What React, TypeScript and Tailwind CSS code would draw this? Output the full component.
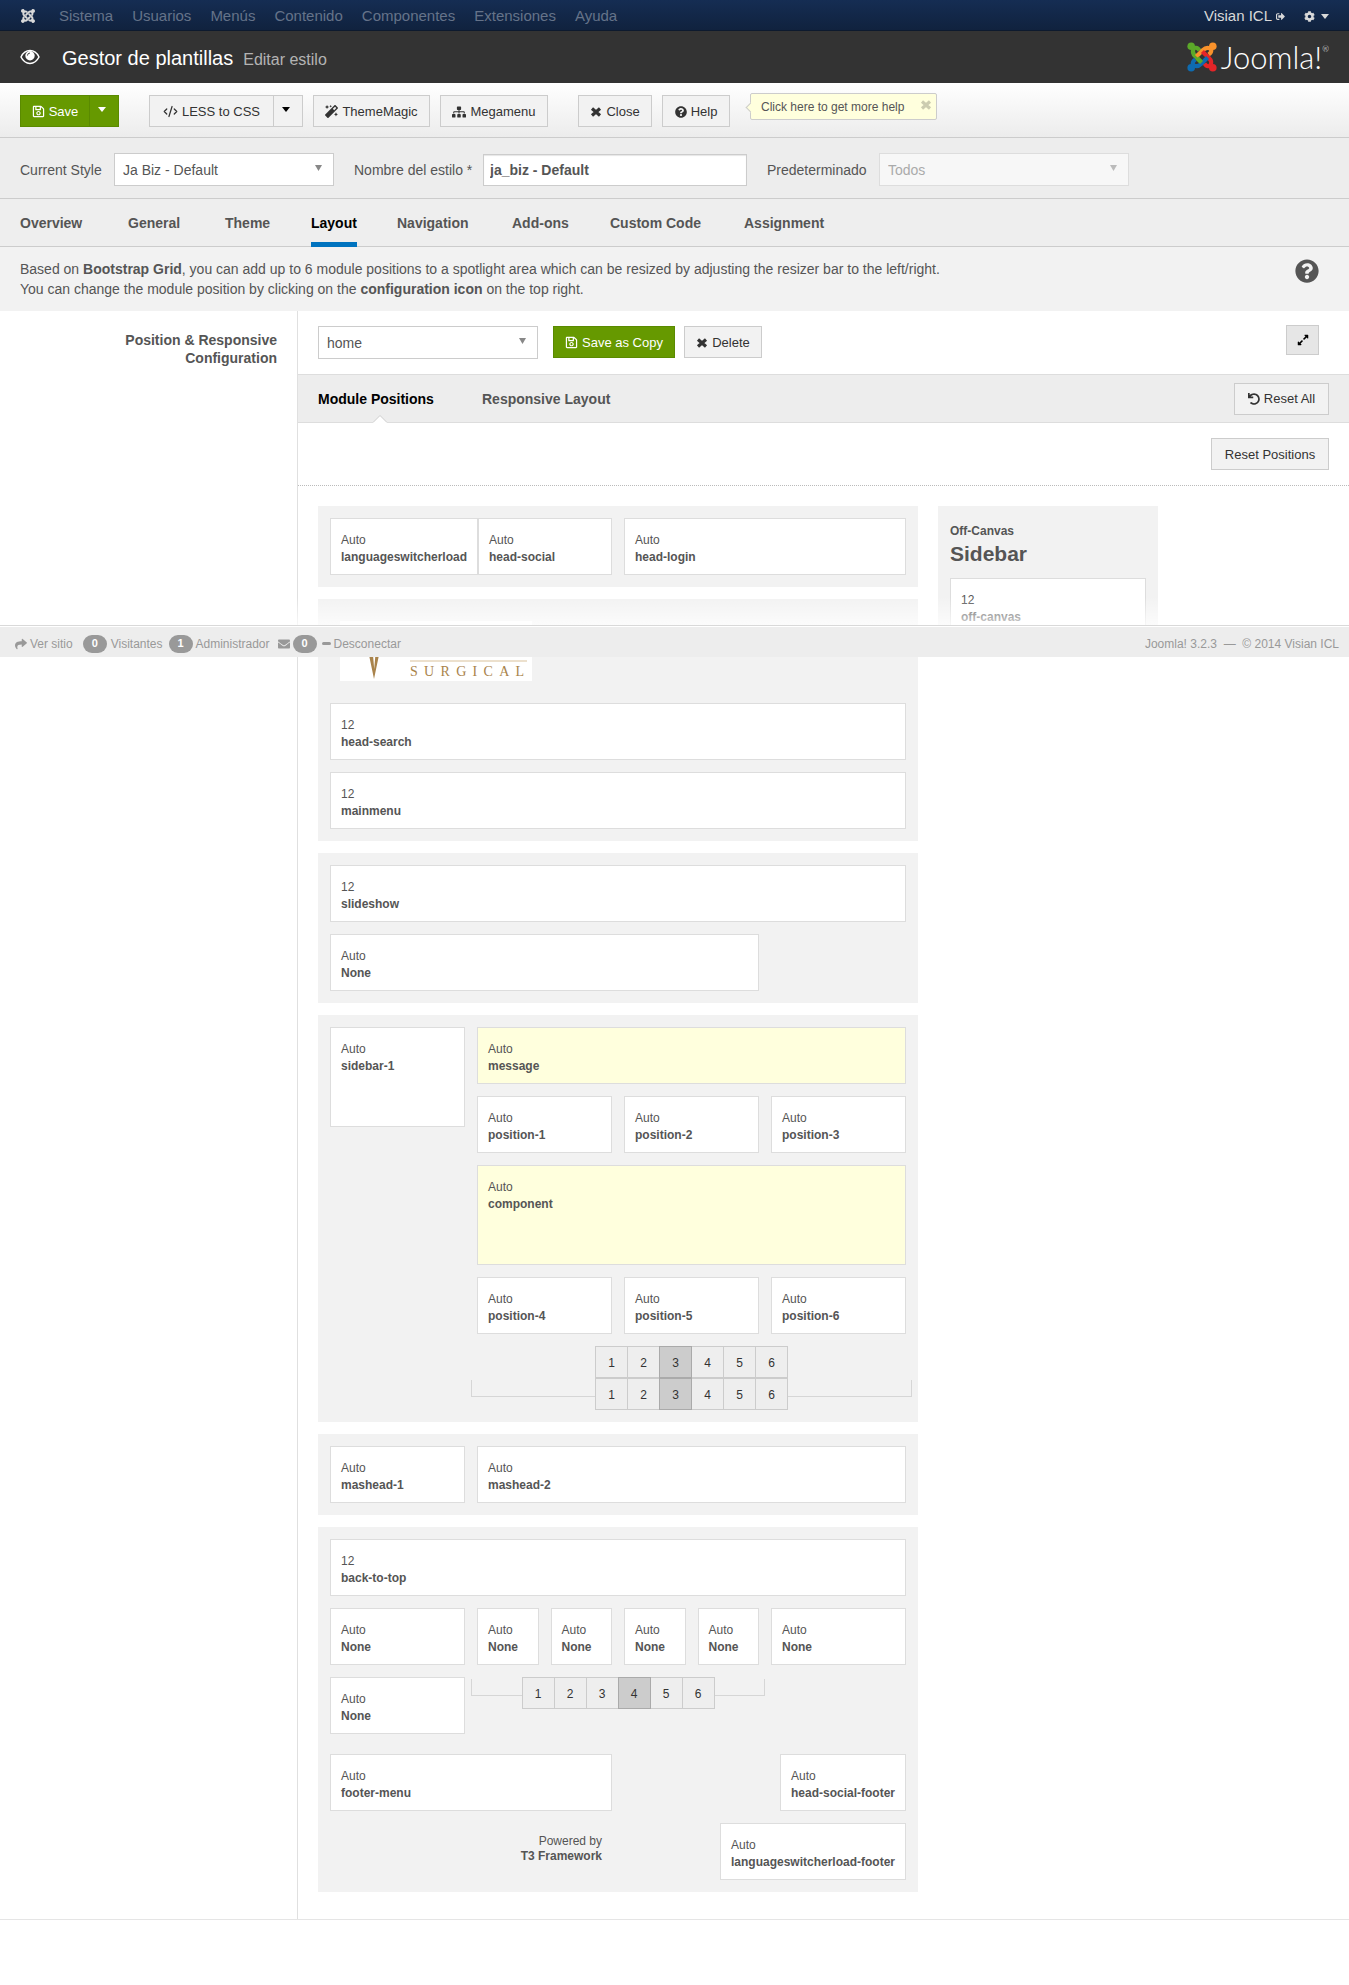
import type { ReactNode } from "react";
import clsx from "clsx";
import { CodeXml } from "lucide-react";
import {
  FaCog,
  FaEnvelope,
  FaExpandAlt,
  FaJoomla,
  FaMagic,
  FaQuestionCircle,
  FaRegSave,
  FaShare,
  FaSignOutAlt,
  FaSitemap,
  FaUndo,
} from "react-icons/fa";

const menu = ["Sistema", "Usuarios", "Menús", "Contenido", "Componentes", "Extensiones", "Ayuda"];

const tabs = [
  { label: "Overview", width: "w-[68px]" },
  { label: "General", width: "w-[57px]" },
  { label: "Theme", width: "w-[46px]" },
  { label: "Layout", width: "w-[46px]" },
  { label: "Navigation", width: "w-[75px]" },
  { label: "Add-ons", width: "w-[58px]" },
  { label: "Custom Code", width: "w-[94px]" },
  { label: "Assignment", width: "w-[82px]" },
];

function Caret({ className }: { className?: string }) {
  return (
    <svg viewBox="0 0 8 5" className={clsx("h-[5px] w-2", className)}>
      <path d="M0 0h8L4 5z" fill="currentColor" />
    </svg>
  );
}

function Cross() {
  return (
    <svg viewBox="0 0 12 12" className="h-3 w-3" fill="none">
      <path d="M2 2.5L10 9.5M10 2.5L2 9.5" stroke="currentColor" strokeWidth="3.2" />
    </svg>
  );
}

function Eye() {
  return (
    <svg viewBox="0 0 20 16" className="h-4 w-5 text-white" fill="none">
      <path
        d="M1 8C3 4 6.2 1.6 10 1.6S17 4 19 8C17 12 13.8 14.4 10 14.4S3 12 1 8z"
        stroke="currentColor"
        strokeWidth="1.5"
      />
      <circle cx="10" cy="6.8" r="4.7" fill="currentColor" />
      <path d="M7.4 6.6A2.7 2.7 0 0 1 10 4" stroke="#333" strokeWidth=".9" />
    </svg>
  );
}

interface ButtonProps {
  children: ReactNode;
  icon?: ReactNode;
  primary?: boolean;
  className?: string;
  label?: string;
}

function Button({ children, icon, primary, className, label }: ButtonProps) {
  return (
    <button
      type="button"
      aria-label={label}
      className={clsx(
        "flex h-8 items-center justify-center gap-1 whitespace-nowrap border pt-px text-[13px]",
        primary
          ? "border-[#5a8a00] bg-[#690] text-white"
          : "border-[#ccc] bg-[#f2f2f2] text-[#333]",
        className
      )}
    >
      {icon}
      {children}
    </button>
  );
}

interface SelectProps {
  id: string;
  value: string;
  className?: string;
  disabled?: boolean;
}

function Select({ id, value, className, disabled }: SelectProps) {
  return (
    <div className={clsx("relative", className)}>
      <select
        id={id}
        aria-label={id === "profile" ? "Layout profile" : undefined}
        disabled={disabled}
        defaultValue={value}
        className={clsx(
          "block h-[33px] w-full appearance-none border px-2 text-sm",
          disabled
            ? "border-[#ddd] bg-[#f7f7f7] text-[#aaa] opacity-100"
            : "border-[#ccc] bg-white text-[#555]"
        )}
      >
        <option>{value}</option>
      </select>
      <svg
        viewBox="0 0 7 6"
        className={clsx(
          "pointer-events-none absolute right-3 top-3 h-1.5 w-[7px]",
          disabled ? "text-[#bbb]" : "text-[#888]"
        )}
      >
        <path d="M0 0h7L3.5 6z" fill="currentColor" />
      </svg>
    </div>
  );
}

function JoomlaMark() {
  const arm = "M12.5 8.5C10.5 5 7 5 6.2 7.6C5.2 10.5 6.5 12.5 8 14L14.6 20.6";
  const pieces = [
    { color: "#5ba829", turn: 0 },
    { color: "#f9922b", turn: 90 },
    { color: "#e52528", turn: 180 },
    { color: "#0e6bb0", turn: 270 },
  ];
  return (
    <svg viewBox="0 0 30 30" className="h-[30px] w-[30px]" fill="none">
      {pieces.map((piece) => (
        <g key={piece.color} transform={`rotate(${piece.turn} 15 15)`}>
          <path d={arm} stroke={piece.color} strokeWidth="4.2" />
          <circle cx="4.2" cy="4.2" r="3.8" fill={piece.color} />
        </g>
      ))}
      <path d="M10 16L14.6 20.6" stroke="#5ba829" strokeWidth="4.2" />
    </svg>
  );
}

interface BoxProps {
  size?: string;
  name: string;
  className?: string;
}

function Box({ size = "Auto", name, className = "bg-white" }: BoxProps) {
  return (
    <div
      className={clsx(
        "min-h-[57px] whitespace-nowrap border border-[#ddd] px-2.5 pt-[13px] pb-2 text-xs/[17px]",
        className
      )}
    >
      <p>{size}</p>
      <p className="font-bold">{name}</p>
    </div>
  );
}

function Panel({ children }: { children: ReactNode }) {
  return <section className="grid grid-cols-12 items-start gap-3 bg-[#f2f2f2] p-3">{children}</section>;
}

function Counter({ active }: { active: number }) {
  return (
    <div className="flex pl-px">
      {[1, 2, 3, 4, 5, 6].map((n) => (
        <button
          key={n}
          type="button"
          className={clsx(
            "-ml-px h-8 w-[33px] border pt-0.5 text-xs text-[#333]",
            n === active ? "relative border-[#aaa] bg-[#ccc]" : "border-[#ccc] bg-[#eee]"
          )}
        >
          {n}
        </button>
      ))}
    </div>
  );
}

// Counter with the bracket lines that show which columns it controls
function Spotlight({ active }: { active: number }) {
  return (
    <div className="-mx-1.5 flex items-start">
      <div className="mt-0.5 h-[17px] flex-1 border-b border-l border-[#d6d6d6]" />
      <Counter active={active} />
      <div className="mt-0.5 h-[17px] flex-1 border-b border-r border-[#d6d6d6]" />
    </div>
  );
}

function Badge({ children }: { children: ReactNode }) {
  return (
    <span className="flex h-[18px] w-6 items-center justify-center rounded-full bg-[#999] text-[11px] font-bold text-white">
      {children}
    </span>
  );
}

function StatusBar() {
  return (
    <footer className="absolute inset-x-0 top-[597px] text-xs text-[#999]">
      <div className="h-7 bg-linear-to-b from-white/0 to-white/75" />
      <div className="border-t border-[#d9d9d9] bg-white pt-px">
        <div className="flex h-[30px] items-center justify-between bg-[#ededed] pt-[3px] pr-2.5 pl-[15px]">
          <div className="flex items-center">
            <a href="#sitio" className="mr-2.5 flex items-center gap-[3px]">
              <FaShare size={12} />
              Ver sitio
            </a>
            <Badge>0</Badge>
            <span className="mr-1.5 ml-1">Visitantes</span>
            <Badge>1</Badge>
            <span className="mr-2 ml-[3px]">Administrador</span>
            <a href="#mensajes" className="mr-[5px] flex items-center gap-[3px]">
              <FaEnvelope size={12} />
              <Badge>0</Badge>
            </a>
            <a href="#salir" className="flex items-center gap-[3px]">
              <span className="h-[3px] w-[9px] rounded-xs bg-[#999]" />
              Desconectar
            </a>
          </div>
          <p className="whitespace-pre">Joomla! 3.2.3 {" — "} © 2014 Visian ICL</p>
        </div>
      </div>
    </footer>
  );
}

function TopBar() {
  return (
    <>
      <nav className="flex h-[31px] items-center gap-[19px] border-b border-[#0d1a2e] bg-linear-to-b from-[#152d53] to-[#10223e] pt-0.5 pr-5 pl-5 text-[15px]">
        <FaJoomla size={16} className="mr-1 text-[#d9d9d9]" />
        {menu.map((item) => (
          <a key={item} href={"#" + item} className="text-[#657389]">
            {item}
          </a>
        ))}
        <a href="#usuario" className="ml-auto flex items-center gap-1 text-[#d9d9d9]">
          Visian ICL
          <FaSignOutAlt size={9} />
        </a>
        <button type="button" aria-label="Opciones" className="flex items-center gap-1.5 text-[#d9d9d9]">
          <FaCog size={11} />
          <Caret />
        </button>
      </nav>
      <header className="flex h-[52px] items-center bg-[#333] pr-5 pl-5">
        <Eye />
        <h1 className="ml-[22px] flex items-baseline gap-2.5 pt-0.5 text-xl text-white">
          Gestor de plantillas
          <small className="text-base text-[#b3b3b3]">Editar estilo</small>
        </h1>
        <div className="ml-auto flex items-center gap-1 text-white">
          <JoomlaMark />
          <span className="flex items-start font-['Lato'] text-[31px]/[30px] font-light">
            Joomla!<small className="text-[8px]/[14px]">®</small>
          </span>
        </div>
      </header>
    </>
  );
}

function Toolbar() {
  return (
    <div className="flex h-[55px] items-start border-b border-[#ccc] bg-linear-to-b from-white to-[#ececec] px-5 pt-3">
      <div className="flex">
        <Button primary icon={<FaRegSave size={13} />} className="w-[70px]">
          Save
        </Button>
        <Button primary label="More save options" className="-ml-px w-[30px] pr-1 pb-1">
          <Caret />
        </Button>
      </div>
      <div className="ml-[30px] flex">
        <Button icon={<CodeXml size={15} />} className="w-[125px]">
          LESS to CSS
        </Button>
        <Button label="More LESS options" className="-ml-px w-[30px] pr-1 pb-1">
          <Caret className="text-black" />
        </Button>
      </div>
      <Button icon={<FaMagic size={13} />} className="ml-2.5 w-[117px]">
        ThemeMagic
      </Button>
      <Button icon={<FaSitemap size={14} />} className="ml-2.5 w-[108px]">
        Megamenu
      </Button>
      <Button icon={<Cross />} className="ml-[30px] w-[74px]">
        Close
      </Button>
      <Button icon={<FaQuestionCircle size={12} />} className="ml-2.5 w-[68px]">
        Help
      </Button>
      <div className="relative -mt-0.5 ml-5 flex h-[27px] w-[187px] items-center rounded-xs border border-[#ccc] bg-[#ffd] pt-px pl-2.5 text-xs text-[#555]">
        <span className="absolute top-2.5 -left-[4px] h-[7px] w-[7px] rotate-45 border-b border-l border-[#ccc] bg-[#ffd]" />
        Click here to get more help
        <button type="button" aria-label="Cerrar" className="absolute top-[5px] right-1 text-[#ccccb0]">
          <Cross />
        </button>
      </div>
    </div>
  );
}

function StyleForm() {
  return (
    <form className="flex h-[61px] items-center border-b border-[#ccc] bg-[#ededed] px-5 pt-[3px] text-sm">
      <label htmlFor="style" className="mr-2.5 w-[84px]">
        Current Style
      </label>
      <Select id="style" value="Ja Biz - Default" className="w-[220px]" />
      <label htmlFor="name" className="mr-2.5 ml-5 w-[119px]">
        Nombre del estilo *
      </label>
      <input
        id="name"
        defaultValue="ja_biz - Default"
        className="h-8 w-[264px] border border-[#ccc] bg-white px-1.5 font-bold shadow-[inset_0_1px_1px_#0000001a]"
      />
      <label htmlFor="default" className="mr-2.5 ml-5 w-[102px]">
        Predeterminado
      </label>
      <Select id="default" value="Todos" className="w-[250px]" disabled />
    </form>
  );
}

export default function App() {
  return (
    <div className="relative bg-white pb-16 font-['Liberation_Sans',Arial,sans-serif] text-[#555]">
      <TopBar />
      <Toolbar />
      <StyleForm />

      <nav className="flex h-12 gap-10 border-b border-[#ccc] bg-[#eee] px-5 text-sm font-bold">
        {tabs.map((tab) => (
          <a
            key={tab.label}
            href={"#" + tab.label}
            className={clsx(
              "-mb-px flex items-center whitespace-nowrap border-b-5 pt-1",
              tab.width,
              tab.label === "Layout" ? "border-[#0073bf] text-black" : "border-transparent"
            )}
          >
            {tab.label}
          </a>
        ))}
      </nav>

      <div className="flex h-16 justify-between bg-[#f2f2f2] pt-3 pr-[30px] pl-5 text-sm/5">
        <p>
          Based on <b>Bootstrap Grid</b>, you can add up to 6 module positions to a spotlight area which can be
          resized by adjusting the resizer bar to the left/right.
          <br />
          You can change the module position by clicking on the <b>configuration icon</b> on the top right.
        </p>
        <FaQuestionCircle size={24} />
      </div>

      <div className="flex border-b border-[#e5e5e5]">
        <aside className="w-[298px] shrink-0 border-r border-[#e0e0e0] pt-5 pr-5 text-right text-sm/[18px] font-bold">
          <h2>
            Position &amp; Responsive
            <br />
            Configuration
          </h2>
        </aside>

        <main className="flex-1">
          <div className="flex h-[63px] items-start pt-[15px] pr-[30px] pl-5">
            <Select id="profile" value="home" className="w-[220px]" />
            <Button primary icon={<FaRegSave size={13} />} className="ml-[15px] w-[122px]">
              Save as Copy
            </Button>
            <Button icon={<Cross />} className="ml-[9px] w-[78px]">
              Delete
            </Button>
            <button
              type="button"
              aria-label="Full screen"
              className="-mt-px ml-auto flex h-[30px] w-[33px] items-center justify-center border border-[#ccc] bg-[#e6e6e6] text-black"
            >
              <FaExpandAlt size={12} />
            </button>
          </div>

          <div className="flex h-[49px] items-center border-y border-[#ddd] bg-[#ededed] px-5 text-sm font-bold">
            <a href="#positions" className="relative flex h-full w-[124px] items-center text-black">
              Module Positions
              <svg viewBox="0 0 14 8" className="absolute -bottom-px left-[55px] h-2 w-3.5">
                <path d="M0 7.5L7 .5L14 7.5V8H0z" fill="#fff" />
                <path d="M0 7.5L7 .5L14 7.5" fill="none" stroke="#ccc" />
              </svg>
            </a>
            <a href="#responsive" className="ml-10">
              Responsive Layout
            </a>
            <Button icon={<FaUndo size={12} />} className="ml-auto w-[95px] font-normal">
              Reset All
            </Button>
          </div>

          <div className="flex h-[63px] justify-end border-b border-dotted border-[#bbb] pt-[15px] pr-5">
            <Button className="w-[118px]">Reset Positions</Button>
          </div>

          <div className="flex items-start gap-5 px-5 pt-5 pb-[27px]">
            <div className="flex w-[600px] flex-col gap-3">
              <Panel>
                <div className="col-span-6 flex">
                  <Box name="languageswitcherload" className="shrink-0 bg-white" />
                  <Box name="head-social" className="flex-1 bg-white" />
                </div>
                <Box name="head-login" className="col-span-6 bg-white" />
              </Panel>

              <Panel>
                <div className="col-span-12 p-2.5">
                  <div className="flex h-[60px] w-48 items-end justify-between bg-white pr-[5px] pl-[29px]">
                    <svg viewBox="0 0 10 24" className="mb-0.5 h-6 w-2.5">
                      <path d="M0 0h4L5.2 14L6.4 0H10L5 24z" fill="#a9834b" />
                    </svg>
                    <div className="w-[117px] border-t-2 border-[#ece0cd] pt-px font-['Liberation_Serif',serif] text-sm/[18px] tracking-[0.45em] text-[#a9834b]">
                      SURGICAL
                    </div>
                  </div>
                </div>
                <Box size="12" name="head-search" className="col-span-12 bg-white" />
                <Box size="12" name="mainmenu" className="col-span-12 bg-white" />
              </Panel>

              <Panel>
                <Box size="12" name="slideshow" className="col-span-12 bg-white" />
                <Box name="None" className="col-span-9 bg-white" />
              </Panel>

              <Panel>
                <Box name="sidebar-1" className="col-span-3 h-[100px] bg-white" />
                <div className="col-span-9 grid grid-cols-3 gap-3">
                  <Box name="message" className="col-span-3 bg-[#ffd]" />
                  <Box name="position-1" />
                  <Box name="position-2" />
                  <Box name="position-3" />
                  <Box name="component" className="col-span-3 h-[100px] bg-[#ffd]" />
                  <Box name="position-4" />
                  <Box name="position-5" />
                  <Box name="position-6" />
                  <div className="col-span-3">
                    <div className="flex justify-center">
                      <Counter active={3} />
                    </div>
                    <Spotlight active={3} />
                  </div>
                </div>
              </Panel>

              <Panel>
                <Box name="mashead-1" className="col-span-3 bg-white" />
                <Box name="mashead-2" className="col-span-9 bg-white" />
              </Panel>

              <Panel>
                <Box size="12" name="back-to-top" className="col-span-12 bg-white" />
                <div className="col-span-12 grid grid-cols-8 items-start gap-3 pb-2">
                  <Box name="None" className="col-span-2 bg-white" />
                  <Box name="None" />
                  <Box name="None" />
                  <Box name="None" />
                  <Box name="None" />
                  <Box name="None" className="col-span-2 bg-white" />
                  <Box name="None" className="col-span-2 bg-white" />
                  <div className="col-span-4">
                    <Spotlight active={4} />
                  </div>
                </div>
                <div className="col-span-6">
                  <Box name="footer-menu" />
                  <p className="pt-[23px] pr-2.5 text-right text-xs/[15px]">
                    Powered by
                    <br />
                    <b>T3 Framework</b>
                  </p>
                </div>
                <div className="col-span-6 flex flex-col items-end gap-3">
                  <Box name="head-social-footer" />
                  <Box name="languageswitcherload-footer" />
                </div>
              </Panel>
            </div>

            <section className="w-[220px] bg-[#f2f2f2] px-3 pt-4 pb-3 font-bold">
              <p className="text-xs/[18px]">Off-Canvas</p>
              <h3 className="mb-2.5 text-[21px]/7">Sidebar</h3>
              <Box size="12" name="off-canvas" className="bg-white font-normal" />
            </section>
          </div>
        </main>
      </div>

      <StatusBar />
    </div>
  );
}
